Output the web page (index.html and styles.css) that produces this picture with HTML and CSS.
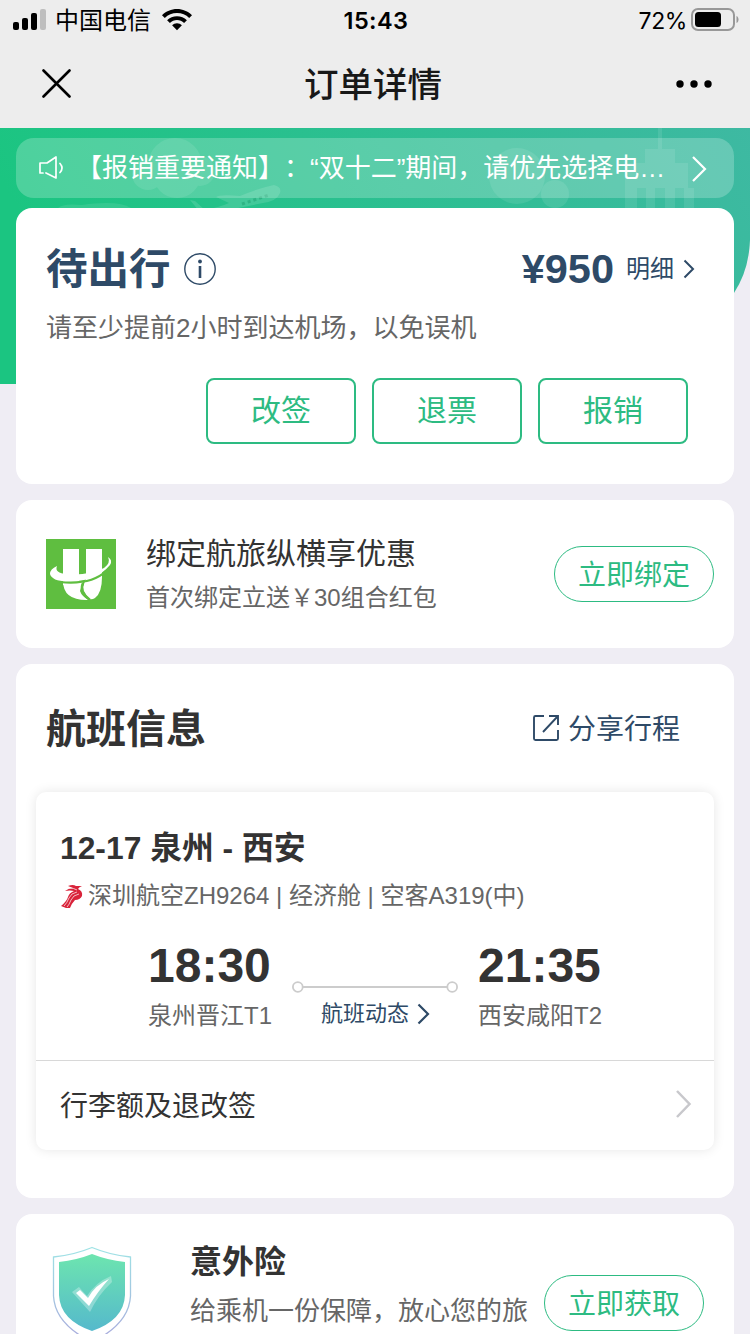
FILE: index.html
```html
<!DOCTYPE html>
<html lang="zh-CN">
<head>
<meta charset="utf-8">
<title>订单详情</title>
<link rel="stylesheet" href="styles.css">
</head>
<body>
<div class="screen">
  <header class="top">
    <div class="status">
      <div class="status-left">
        <svg width="33" height="22" viewBox="0 0 33 22"><rect x="0" y="13" width="6" height="8" rx="2"/><rect x="9" y="9" width="6" height="12" rx="2"/><rect x="18" y="4" width="6" height="17" rx="2"/><rect x="27" y="0" width="6" height="21" rx="2" fill="#bebebe"/></svg>
        <span class="carrier">中国电信</span>
        <svg class="wifi" width="30" height="22" viewBox="0 0 30 22"><path d="M15 0C9.300 0 4 2.300 0 6.200L2.800 9C6 5.800 10.300 4 15 4s9 1.800 12.200 5L30 6.200C26 2.300 20.700 0 15 0zM15 7.200c-3.800 0-7.300 1.500-9.900 4.100l2.800 2.800c1.900-1.900 4.400-3 7.100-3s5.200 1.100 7.100 3l2.800-2.800C22.300 8.700 18.800 7.200 15 7.200zM15 14.200c-1.900 0-3.600.8-4.900 2L15 21.200l4.900-5c-1.300-1.200-3-2-4.900-2z"/></svg>
      </div>
      <div class="clock">15:43</div>
      <div class="status-right">
        <span>72%</span>
        <svg width="48" height="24" viewBox="0 0 48 24"><rect x="1" y="1" width="42" height="21" rx="6" fill="none" stroke="#989898" stroke-width="2"/><rect x="4" y="4" width="26" height="15" rx="3.500"/><path d="M45.500 8c2.700 1 2.700 6 0 7z" fill="#989898"/></svg>
      </div>
    </div>
    <div class="nav">
      <svg width="30" height="30" viewBox="0 0 30 30"><path d="M1.500 1.500L27.500 27.500M27.500 1.500L1.500 27.500" stroke="#000" stroke-width="2.600" stroke-linecap="round"/></svg>
      <h1>订单详情</h1>
      <svg width="36" height="8" viewBox="0 0 36 8"><circle cx="4" cy="4" r="3.700"/><circle cx="18" cy="4" r="3.700"/><circle cx="32" cy="4" r="3.700"/></svg>
    </div>
  </header>

  <main class="content">
    <svg class="hero" width="750" height="256" viewBox="0 0 750 256">
      <defs><linearGradient id="heroFill" x1="0" y1="0.200" x2="1" y2="0"><stop offset="0" stop-color="#1bc581"/><stop offset="1" stop-color="#3eb9a2"/></linearGradient></defs>
      <path d="M0 0H750V112Q749 142 734 165L650 256H0z" fill="url(#heroFill)"/>
      <g fill="#fff" opacity=".09">
        <circle cx="175" cy="37" r="27"/><circle cx="148" cy="46" r="16"/><circle cx="200" cy="43" r="15"/><circle cx="177" cy="46" r="24"/>
        <circle cx="517" cy="48" r="28"/><circle cx="555" cy="66" r="14"/>
        <path d="M58 80q5-5 24-3 36-5 49 3z"/>
        <path d="M658 0h4v21h13v14h13v25h6v20h-10V60h-9v20h-10V60h-10v20h-9V60h-9v20h-12V35h20V21h13z"/>
      </g>
      <g fill="#fff" opacity=".13">
        <path d="M190 72l5 1 10 9q15-3 24-7l-13-6q4-3 24-1Q259 60 274 57q8 2 6 8-3 8-17 10l-40 8h-24z"/>
      </g>
      <path d="M242 76l27-9" stroke="#1c9f70" stroke-opacity=".5" stroke-width="3" stroke-dasharray="3 3"/>
    </svg>

    <div class="notice">
      <svg width="26" height="24" viewBox="0 0 26 24" fill="none" stroke="#fff" stroke-width="1.700" stroke-linejoin="round" stroke-linecap="round"><path d="M4 17H1V7h7l9-6v21l-10-5M21 7.500q4 4.500 0 9"/></svg>
      <p>【报销重要通知】：“双十二”期间，请优先选择电…</p>
      <svg class="more" width="16" height="28" viewBox="0 0 16 28"><path d="M2 2l12 12L2 26" fill="none" stroke="#fff" stroke-width="2.200"/></svg>
    </div>

    <section class="card order">
      <div class="order-head">
        <h2>待出行</h2>
        <svg width="34" height="34" viewBox="0 0 34 34" fill="#2e4a67"><circle cx="17" cy="17" r="15.200" fill="none" stroke="#2e4a67" stroke-width="1.400"/><circle cx="17" cy="9.500" r="1.900"/><rect x="15.700" y="14" width="2.600" height="12"/></svg>
        <strong class="price">¥950</strong>
        <span class="detail">明细</span>
        <svg width="12" height="20" viewBox="0 0 12 20"><path d="M1.500 1.500L10 10l-8.500 8.500" fill="none" stroke="#2e4a67" stroke-width="2"/></svg>
      </div>
      <p class="tip">请至少提前2小时到达机场，以免误机</p>
      <div class="actions">
        <button>改签</button>
        <button>退票</button>
        <button>报销</button>
      </div>
    </section>

    <section class="card bind">
      <svg class="logo" width="70" height="70" viewBox="0 0 70 70">
        <rect width="70" height="70" fill="#5fbe40"/>
        <path d="M17 10h16v36H17zM40 10h16v28q0 16-7 21-3 2-6 1l-7-10 4-10zM17 42h20l-3 10q2 6 9 9-26 1-26-19z" fill="#fff"/>
        <path d="M37 44q-4 9 7 17" fill="none" stroke="#5fbe40" stroke-width="2.500"/>
        <path d="M11 27Q4 30 4 35q2 7 17 7.500Q50 43 64 26q3-5-2-8 3 6-4 11-17 8-37 6-13-1-10-8z" fill="#fff"/>
        <path d="M14 43q32 3 46-11" fill="none" stroke="#5fbe40" stroke-width="2.200"/>
      </svg>
      <div class="bind-text">
        <h3>绑定航旅纵横享优惠</h3>
        <p>首次绑定立送￥30组合红包</p>
      </div>
      <button class="pill">立即绑定</button>
    </section>

    <section class="card flight">
      <div class="flight-head">
        <h2>航班信息</h2>
        <svg width="28" height="28" viewBox="0 0 28 28" fill="none" stroke="#2e4a67" stroke-width="1.900"><path d="M12 2H3.500Q2 2 2 3.500v21Q2 26 3.500 26h21q1.500 0 1.500-1.500V16M17 2h9v9M26 2L11 18"/></svg>
        <span>分享行程</span>
      </div>
      <div class="ticket">
        <div class="ticket-main">
          <h3>12-17 泉州 - 西安</h3>
          <div class="airline">
            <svg width="23" height="24" viewBox="0 0 23 24"><path d="M8 2q5-2 8 0h6q-3 1-4 3 5 2 4 7-2 4-7 4-3 3-5 8H6l-5-2q6-5 7-9 1-4 6-6-4-1-9 0 4-3 8-3z" fill="#d9233a"/><path d="M17 8q-6 1-8 6t-5 8M19 10q-6 1-8 6t-4 7M9 4q5 0 8 2" fill="none" stroke="#fff" stroke-width=".7"/></svg>
            <span>深圳航空ZH9264 | 经济舱 | 空客A319(中)</span>
          </div>
          <div class="route">
            <div class="stop"><b>18:30</b><span>泉州晋江T1</span></div>
            <div class="link">
              <svg width="166" height="12" viewBox="0 0 166 12" fill="none" stroke="#ccc" stroke-width="1.800"><path d="M11 6H155"/><circle cx="5.800" cy="6" r="4.900"/><circle cx="160.200" cy="6" r="4.900"/></svg>
              <div class="dynamic">
                <span>航班动态</span>
                <svg width="13" height="22" viewBox="0 0 13 22"><path d="M1.500 1.500L11 11l-9.500 9.500" fill="none" stroke="#2e4a67" stroke-width="2.200"/></svg>
              </div>
            </div>
            <div class="stop"><b>21:35</b><span>西安咸阳T2</span></div>
          </div>
        </div>
        <div class="rules">
          <span>行李额及退改签</span>
          <svg width="17" height="30" viewBox="0 0 17 30"><path d="M2 2l12.500 13L2 28" fill="none" stroke="#c8c8cc" stroke-width="2.500"/></svg>
        </div>
      </div>
    </section>

    <section class="card insure">
      <svg class="shield" width="80" height="94" viewBox="0 0 80 94">
        <defs>
          <linearGradient id="shieldFill" x1="0" y1="0" x2="0" y2="1"><stop offset="0" stop-color="#6de5af"/><stop offset="1" stop-color="#55b9cc"/></linearGradient>
          <linearGradient id="shieldLine" x1="0" y1="0" x2="0" y2="1"><stop offset="0" stop-color="#9ee3e5"/><stop offset="1" stop-color="#a9a9dc"/></linearGradient>
        </defs>
        <path d="M40 1.500Q22 9 1.500 11V50Q3 78 40 96 77 78 78.500 50V11Q58 9 40 1.500z" fill="#fff" stroke="url(#shieldLine)" stroke-width="1.300"/>
        <path d="M40 8Q25 14 7 16V49Q8 74 40 85 72 74 73 49V16Q55 14 40 8z" fill="url(#shieldFill)"/>
        <path d="M20 46l7-5 8 9q9-14 24-20l1 6Q46 49 38 66z" fill="#fff" fill-opacity=".3"/>
        <path d="M24 47l4-3 8 8q7-13 21-19Q46 45 37 60z" fill="#fff"/>
      </svg>
      <div class="insure-text">
        <h3>意外险</h3>
        <p>给乘机一份保障，放心您的旅</p>
      </div>
      <button class="pill">立即获取</button>
    </section>
  </main>
</div>
</body>
</html>
```

FILE: styles.css
```css
* { box-sizing: border-box; margin: 0; padding: 0; }
body {
  font-family: "Liberation Sans", "Noto Sans CJK SC", sans-serif;
  background: #efedf4;
  color: #333;
  text-spacing-trim: space-all;
}
svg { display: block; flex: none; }
h1, h2, h3, p, span, button { white-space: nowrap; }
button { font-family: inherit; background: #fff; color: #2dbb82; }

.screen { width: 750px; height: 1334px; overflow: hidden; }
.top { height: 128px; background: #ededed; color: #000; }
.status {
  height: 40px;
  padding: 0 11px 0 13px;
  display: grid;
  grid-template-columns: 1fr auto 1fr;
  align-items: center;
  font: 24px/38px Inter, "Noto Sans CJK SC", sans-serif;
}
.status-left, .status-right { display: flex; align-items: center; }
.carrier { margin-left: 9px; padding-top: 2px; }
.wifi { margin-left: 11px; }
.clock { padding-top: 2px; font-size: 23.500px; font-weight: 600; letter-spacing: .4px; }
.status-right { justify-content: flex-end; gap: 4px; }
.status-right span { padding-top: 2px; font-size: 23px; letter-spacing: -.4px; }
.nav {
  height: 88px;
  padding: 0 38px 0 42px;
  display: flex;
  align-items: center;
  justify-content: space-between;
}
.nav h1 { margin-right: 2px; padding-top: 2px; font-size: 34.500px; font-weight: 500; line-height: 86px; color: #181818; }

.content { position: relative; padding: 10px 16px 0; }
.hero { position: absolute; left: 0; top: 0; }
.notice {
  position: relative;
  height: 60px;
  margin-bottom: 10px;
  padding: 0 27px 0 23px;
  display: flex;
  align-items: center;
  border-radius: 18px;
  background: rgba(255, 255, 255, .22);
  color: #fff;
}
.notice p { flex: 1; margin-left: 11px; font-size: 26px; line-height: 60px; }
.notice .more { margin-top: 2px; }

.card {
  position: relative;
  margin-bottom: 16px;
  border-radius: 16px;
  background: #fff;
}

.order { height: 276px; padding: 36px 31px 0 30px; color: #2e4a67; }
.order-head { height: 50px; display: flex; align-items: center; }
.order-head h2 { padding-top: 2px; font-size: 41.500px; font-weight: 700; line-height: 50px; }
.order-head h2 + svg { margin-left: 12px; }
.price { margin-left: auto; padding-bottom: 1px; font-size: 41.500px; line-height: 50px; }
.detail { margin: 0 9px 0 12px; font-size: 24px; line-height: 50px; }
.order-head > :last-child { margin-right: 8px; }
.tip { margin-top: 16px; font-size: 26px; line-height: 36px; color: #666; }
.actions { margin: 32px 15px 0 0; display: flex; justify-content: flex-end; gap: 16px; }
.actions button {
  width: 150px;
  height: 66px;
  padding-bottom: 6px;
  border: 2px solid #2dbb82;
  border-radius: 8px;
  font-size: 30px;
}

.bind { height: 148px; padding: 0 20px 0 30px; display: flex; align-items: center; }
.bind-text { margin-left: 30px; padding-top: 4px; }
.bind-text h3 { font-size: 30px; font-weight: 400; line-height: 44px; }
.bind-text p { font-size: 24px; line-height: 44px; color: #666; }
.pill {
  width: 160px;
  height: 56px;
  margin-left: auto;
  padding-bottom: 2px;
  border: 1px solid #2dbb82;
  border-radius: 28px;
  font-size: 28px;
}

.flight { height: 534px; padding: 40px 20px 0; }
.flight-head {
  height: 48px;
  padding: 0 34px 0 10px;
  display: flex;
  align-items: center;
  color: #2e4a67;
  font-size: 28px;
}
.flight-head h2 { margin-right: auto; padding-top: 2px; font-size: 40px; font-weight: 700; line-height: 48px; color: #333; }
.flight-head span { margin-left: 8px; padding-top: 3px; line-height: 48px; }
.ticket {
  height: 358px;
  margin-top: 40px;
  border-radius: 10px;
  box-shadow: 0 0 12px rgba(0, 0, 0, .1);
}
.ticket-main { height: 269px; padding: 36px 24px 0; border-bottom: 1px solid #d8d8d8; }
.ticket-main h3 { font-size: 31.800px; line-height: 40px; }
.airline { margin-top: 10px; display: flex; align-items: center; gap: 5px; font-size: 24px; line-height: 36px; color: #666; }
.route { margin: 24px 0 0 88px; display: flex; }
.stop { width: 123px; display: flex; flex-direction: column; }
.stop b { font-size: 48px; line-height: 56px; }
.stop span { margin-top: 4px; font-size: 24px; line-height: 36px; color: #666; }
.link { margin: 43px 18px 0 21px; width: 168px; }
.dynamic { margin: 5px 0 0 29px; display: flex; align-items: center; gap: 8px; font-size: 22px; line-height: 32px; color: #2e4a67; }
.rules {
  height: 89px;
  padding: 0 22px 4px 24px;
  display: flex;
  align-items: center;
  justify-content: space-between;
  font-size: 28px;
}

.insure { height: 180px; padding: 32px 30px 0 36px; display: flex; align-items: flex-start; }
.insure-text { margin-left: 58px; margin-top: -6px; }
.insure-text h3 { font-size: 32px; font-weight: 700; line-height: 44px; }
.insure-text p { font-size: 26px; line-height: 36px; margin-top: 9px; color: #666; }
.insure .pill { margin-top: 29px; }
```
